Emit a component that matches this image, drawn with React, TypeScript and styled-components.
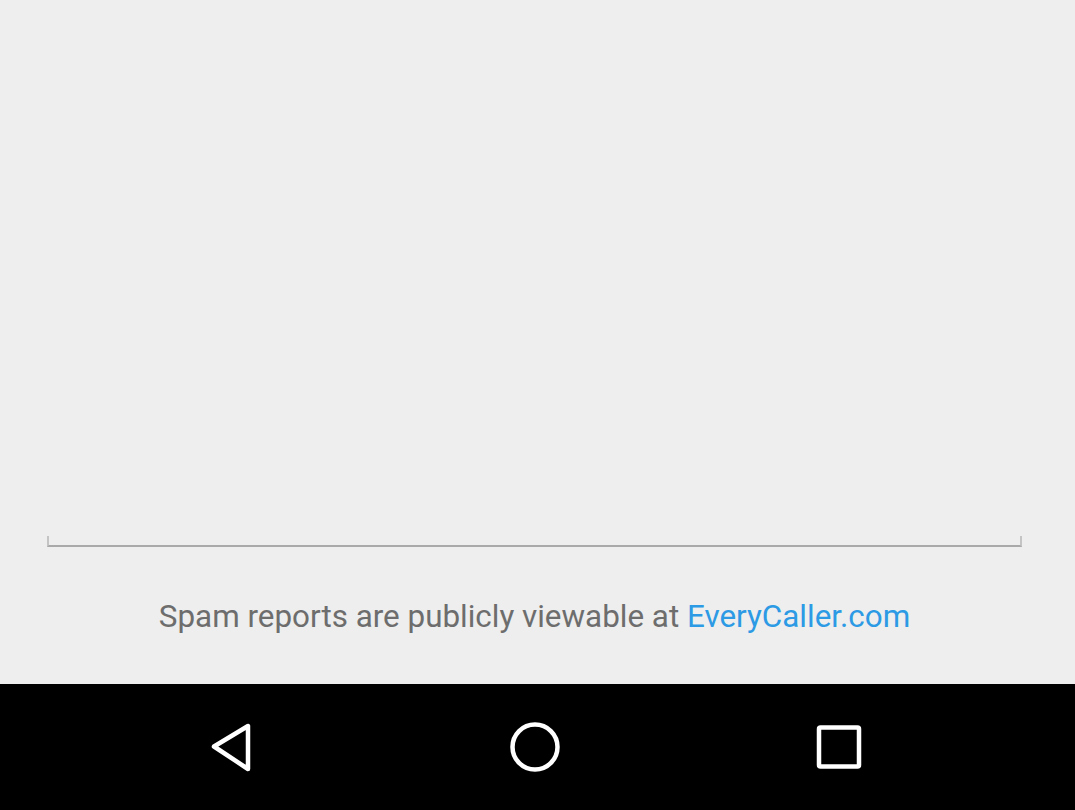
import React from "react";
import styled, { createGlobalStyle } from "styled-components";

const Global = createGlobalStyle`
  html, body { margin: 0; padding: 0; background: #eeeeee; }
  body { font-family: Roboto, "Noto Sans", sans-serif; }
`;

const Screen = styled.div`
  width: 1075px;
  height: 810px;
  display: flex;
  flex-direction: column;
  background: #eeeeee;
  overflow: hidden;
`;

const Content = styled.div`
  flex: 1;
  display: flex;
  flex-direction: column;
  padding: 0 53px 0 47px;
`;

const Spacer = styled.div`
  flex: 1;
`;

const Field = styled.div`
  height: 9px;
  border-left: 2px solid #c4c4c4;
  border-right: 2px solid #c4c4c4;
  border-bottom: 2px solid #a9a9a9;
`;

const Caption = styled.p`
  margin: 0;
  height: 137px;
  box-sizing: border-box;
  padding-top: 51px;
  text-align: center;
  font-family: Roboto, "Noto Sans", sans-serif;
  font-size: 31.4px;
  line-height: 38px;
  color: #6d6d6d;
  white-space: nowrap;
`;

const Link = styled.span`
  color: #2c9ae4;
`;

const NavBar = styled.nav`
  height: 126px;
  flex-shrink: 0;
  background: #000000;
  display: flex;
  align-items: center;
  justify-content: center;
  gap: 248px;
  padding-right: 5px;
`;

const NavButton = styled.div`
  width: 56px;
  height: 56px;
  display: flex;
  align-items: center;
  justify-content: center;
`;

const Icon = styled.svg`
  width: 56px;
  height: 56px;
  fill: none;
  stroke: #ffffff;
  stroke-width: 4.5;
  stroke-linejoin: round;
  stroke-linecap: round;
`;

export default function App() {
  return (
    <>
      <Global />
      <Screen>
        <Content>
          <Spacer />
          <Field />
          <Caption>
            Spam reports are publicly viewable at <Link>EveryCaller.com</Link>
          </Caption>
        </Content>
        <NavBar>
          <NavButton>
            <Icon viewBox="0 0 56 56">
              <polygon points="11,27.5 45,7 45,50" />
            </Icon>
          </NavButton>
          <NavButton>
            <Icon viewBox="0 0 56 56">
              <circle cx="28" cy="28" r="22.5" />
            </Icon>
          </NavButton>
          <NavButton>
            <Icon viewBox="0 0 56 56">
              <rect x="8" y="8.5" width="40" height="39" rx="1.5" />
            </Icon>
          </NavButton>
        </NavBar>
      </Screen>
    </>
  );
}
